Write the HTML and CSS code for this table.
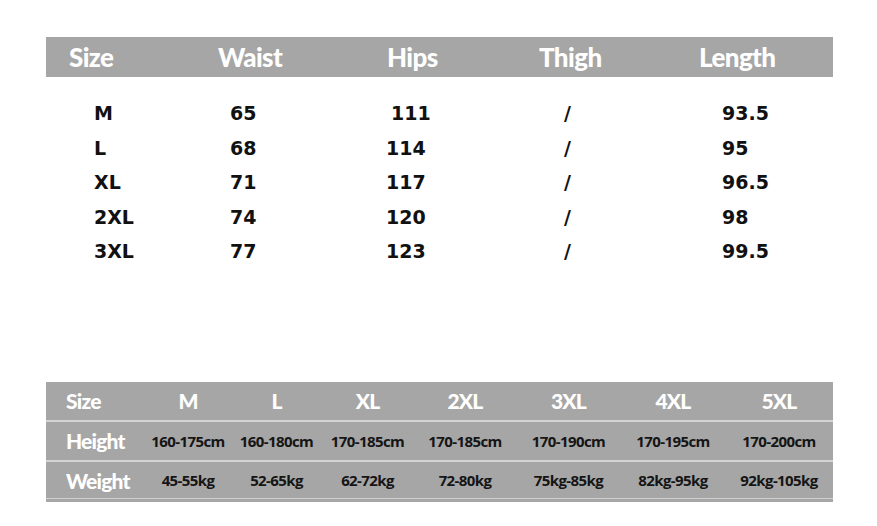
FILE: index.html
```html
<!DOCTYPE html>
<html>
<head>
<meta charset="utf-8">
<link rel="stylesheet" href="styles.css">
</head>
<body>
<div class="page">
  <div class="head-bar">
    <span>Size</span><span>Waist</span><span>Hips</span><span>Thigh</span><span>Length</span>
  </div>
  <div class="data">
    <span>M</span><span>65</span><span class="shift">111</span><span class="slash">/</span><span>93.5</span>
    <span>L</span><span>68</span><span>114</span><span class="slash">/</span><span>95</span>
    <span>XL</span><span>71</span><span>117</span><span class="slash">/</span><span>96.5</span>
    <span>2XL</span><span>74</span><span>120</span><span class="slash">/</span><span>98</span>
    <span>3XL</span><span>77</span><span>123</span><span class="slash">/</span><span>99.5</span>
  </div>
  <div class="fit">
    <div class="fit-row sizes">
      <span class="lbl">Size</span><span>M</span><span>L</span><span>XL</span><span>2XL</span><span>3XL</span><span>4XL</span><span>5XL</span>
    </div>
    <div class="fit-row">
      <span class="lbl">Height</span><span>160-175cm</span><span>160-180cm</span><span>170-185cm</span><span>170-185cm</span><span>170-190cm</span><span>170-195cm</span><span>170-200cm</span>
    </div>
    <div class="fit-row last">
      <span class="lbl">Weight</span><span>45-55kg</span><span>52-65kg</span><span>62-72kg</span><span>72-80kg</span><span>75kg-85kg</span><span>82kg-95kg</span><span>92kg-105kg</span>
    </div>
  </div>
</div>
</body>
</html>
```
FILE: styles.css
```css
html, body {
  margin: 0;
  padding: 0;
  background: #ffffff;
}
.page {
  padding: 37px 0 0 46px;
  width: 787px;
}
.head-bar {
  height: 40px;
  background: #a6a6a6;
  display: grid;
  grid-template-columns: 149px 169px 152px 160px 1fr;
  align-items: center;
  padding-left: 23px;
  color: #ffffff;
  font-family: Lato, "Open Sans", sans-serif;
  font-weight: 900;
  font-size: 26px;
  letter-spacing: -0.6px;
}
.data {
  margin-top: 19px;
  display: grid;
  grid-template-columns: 136px 156px 176px 160px 1fr;
  grid-auto-rows: 34.5px;
  align-items: center;
  padding-left: 48px;
  font-family: "DejaVu Sans", Verdana, sans-serif;
  font-weight: 700;
  font-size: 19px;
  color: #111111;
}
.data .shift {
  padding-left: 5px;
}
.data .slash {
  padding-left: 2px;
}
.fit {
  margin-top: 113px;
  background: #a6a6a6;
  padding-bottom: 3px;
}
.fit-row {
  height: 38px;
  display: grid;
  grid-template-columns: 98px 88px 89px 93px 102px 105px 104px 1fr;
  align-items: center;
  border-bottom: 2px solid #d4d4d4;
  font-family: "Open Sans", sans-serif;
  font-weight: 700;
  font-size: 15px;
  letter-spacing: -0.6px;
  color: #151515;
}
.fit-row.last {
  height: 35px;
  padding-top: 1px;
  border-bottom: 1px solid #cfcfcf;
}
.fit-row span {
  text-align: center;
}
.fit-row .lbl {
  text-align: left;
  padding-left: 20px;
  font-family: Lato, sans-serif;
  font-weight: 900;
  font-size: 21px;
  letter-spacing: -0.8px;
  color: #ffffff;
}
.fit-row.sizes span {
  font-family: Lato, sans-serif;
  font-weight: 900;
  font-size: 21px;
  letter-spacing: -0.8px;
  color: #ffffff;
}
```
